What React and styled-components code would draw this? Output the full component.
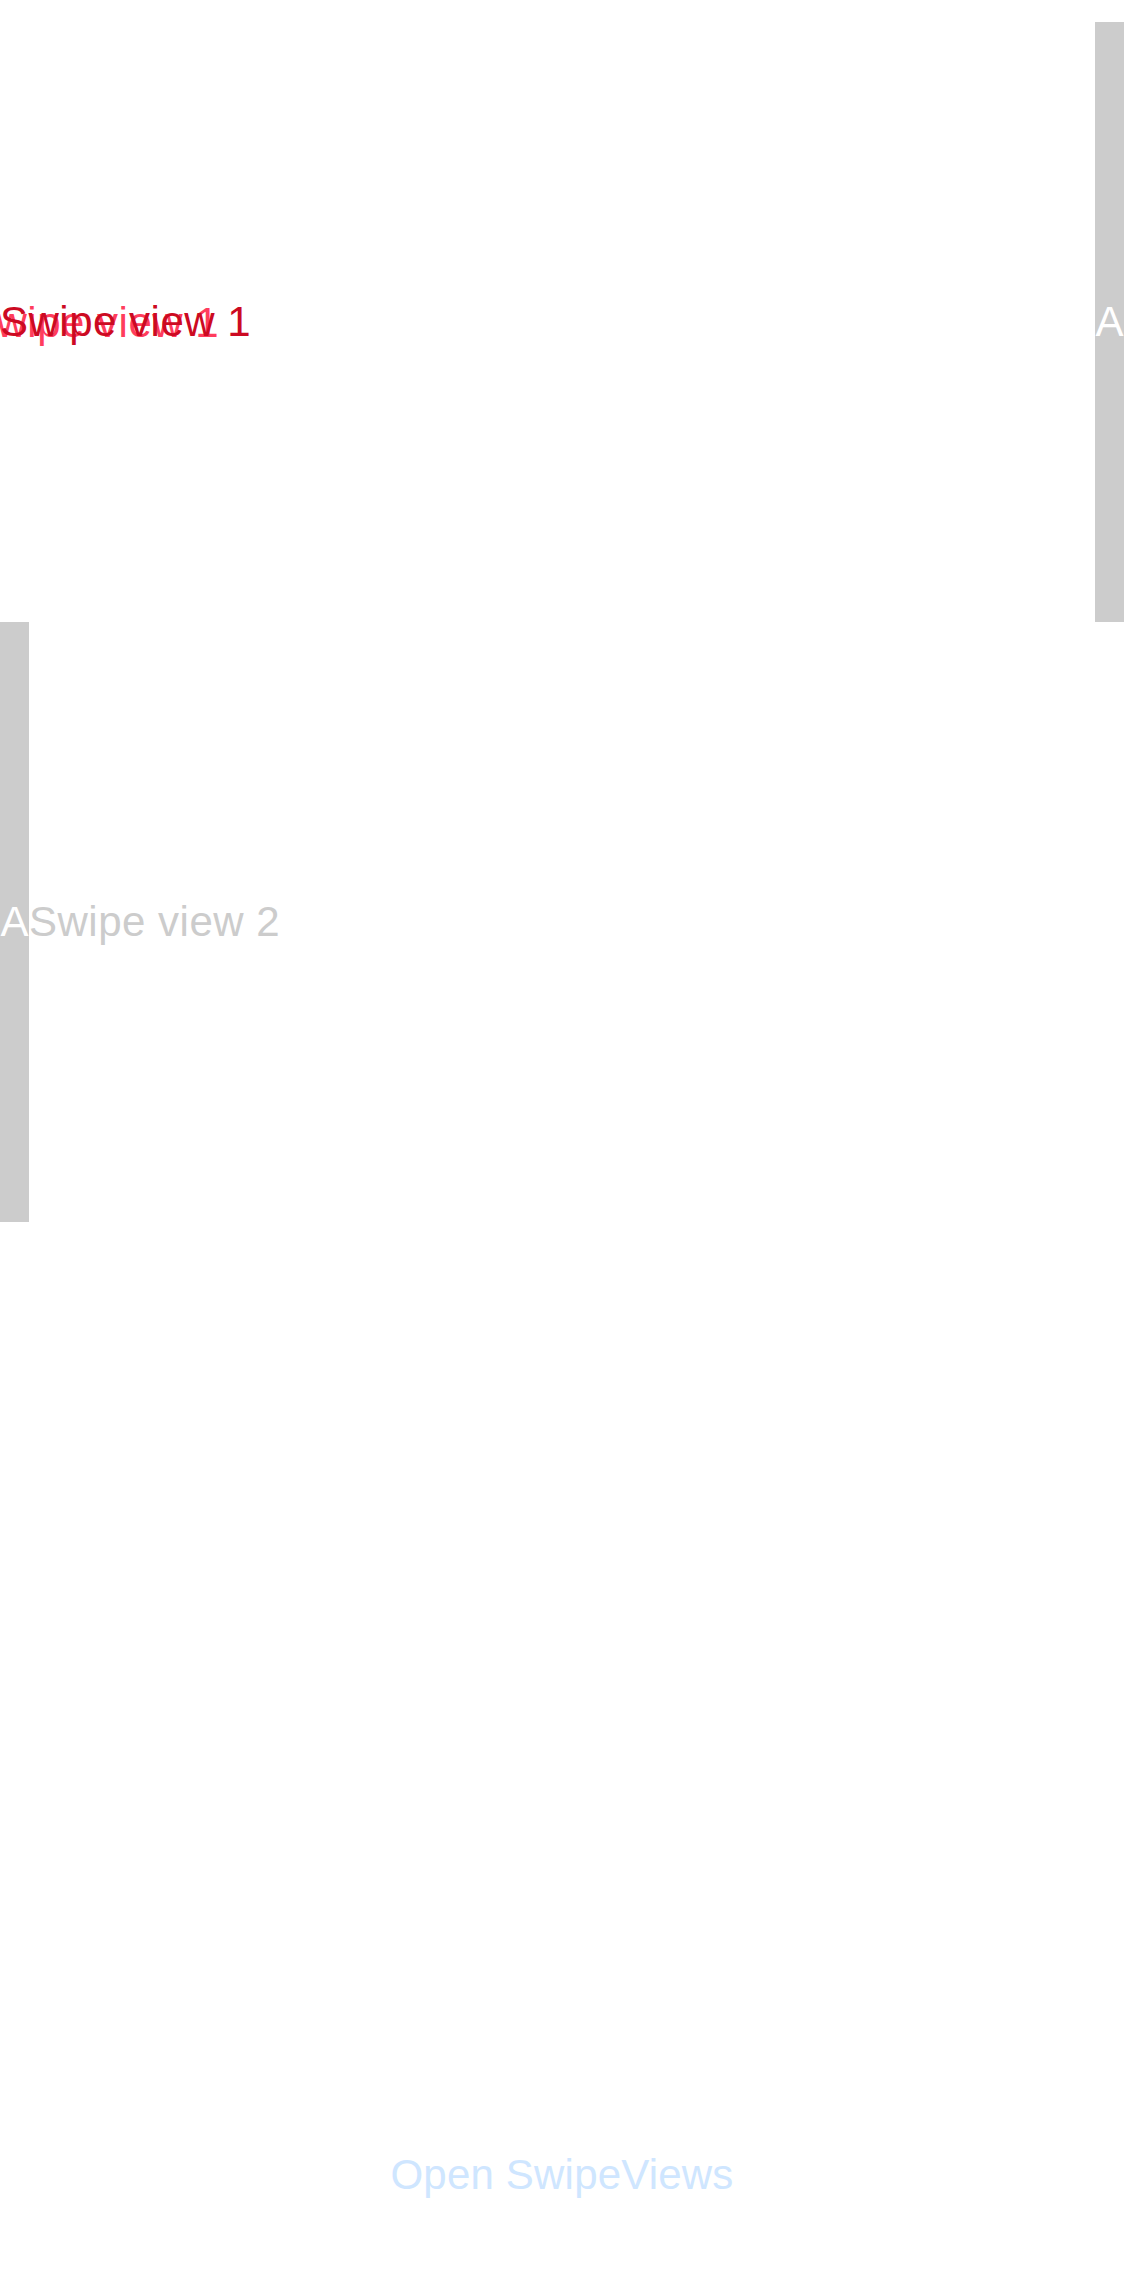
import React from "react";
import styled, { createGlobalStyle } from "styled-components";

const Global = createGlobalStyle`
  html, body { margin: 0; padding: 0; background: #ffffff; }
  body { font-family: "Liberation Sans", Arial, sans-serif; }
  #root { width: 1124px; }
`;

const Page = styled.div`
  width: 1124px;
  height: 2286px;
  display: flex;
  flex-direction: column;
  overflow: hidden;
  background: #ffffff;
`;

const Track = styled.div`
  padding-top: 22px;
  display: flex;
  flex-direction: column;
`;

const Slide = styled.div`
  height: 600px;
  display: flex;
  flex-direction: row;
  align-items: stretch;
`;

const SideBar = styled.div`
  width: 29px;
  flex: 0 0 29px;
  background: #cccccc;
  display: flex;
  align-items: center;
  justify-content: center;
  overflow: hidden;
  color: #ffffff;
  font-size: 42px;
  line-height: 50px;
`;

const Content = styled.div`
  flex: 1;
  display: flex;
  align-items: center;
  position: relative;
  overflow: hidden;
`;

const Label = styled.span`
  position: relative;
  font-size: 42px;
  line-height: 50px;
  letter-spacing: 0.5px;
  white-space: nowrap;
  color: ${(p) => p.$color};
`;

const Ghost = styled(Label)`
  position: absolute;
  left: 0;
  top: 50%;
  transform: translate(${(p) => p.$dx}px, calc(-50% + ${(p) => p.$dy}px));
  opacity: ${(p) => p.$opacity};
`;

const Footer = styled.div`
  margin-top: auto;
  padding-bottom: 86px;
  display: flex;
  justify-content: center;
`;

const OpenButton = styled.button`
  border: none;
  background: transparent;
  padding: 0;
  font-family: "Liberation Sans", Arial, sans-serif;
  font-size: 42px;
  line-height: 50px;
  letter-spacing: 0.2px;
  color: #cfe6ff;
  cursor: pointer;
`;

export default function App() {
  return (
    <>
      <Global />
      <Page>
        <Track>
          <Slide>
            <Content>
              <Ghost $color="#ff3355" $dx={-32} $dy={1} $opacity={0.95}>
                Swipe view 1
              </Ghost>
              <Label $color="#cc0a22">Swipe view 1</Label>
            </Content>
            <SideBar>A</SideBar>
          </Slide>
          <Slide>
            <SideBar>A</SideBar>
            <Content>
              <Label $color="#cccccc">Swipe view 2</Label>
            </Content>
          </Slide>
        </Track>
        <Footer>
          <OpenButton>Open SwipeViews</OpenButton>
        </Footer>
      </Page>
    </>
  );
}
